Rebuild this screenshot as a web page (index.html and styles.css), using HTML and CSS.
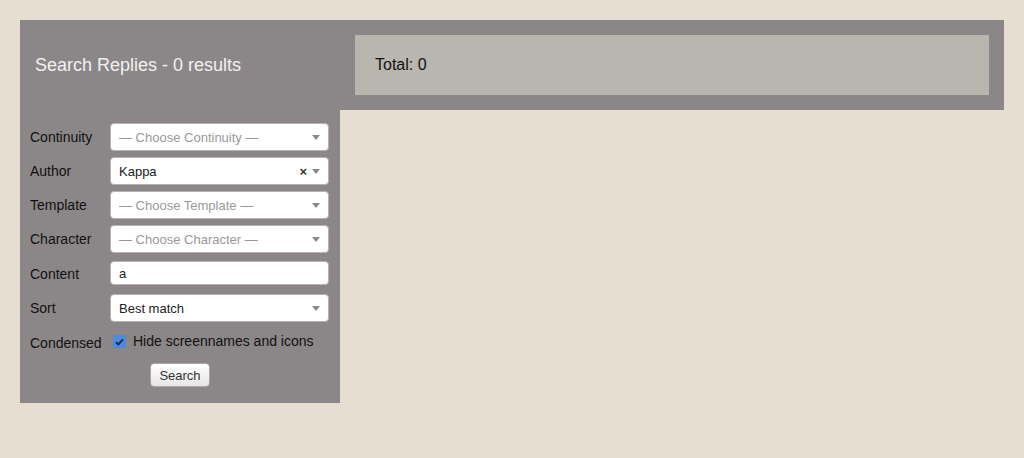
FILE: index.html
```html
<!DOCTYPE html>
<html>
<head>
<meta charset="utf-8">
<title>Search Replies</title>
<link rel="stylesheet" href="styles.css">
</head>
<body>
<div class="wrap">
  <div class="topbar">
    <div class="title">Search Replies - 0 results</div>
    <div class="total-wrap"><div class="total">Total: 0</div></div>
  </div>
  <div class="panel">
    <div class="form">
      <label class="lbl">Continuity</label>
      <div class="sel placeholder"><span class="txt">— Choose Continuity —</span><span class="arrow"></span></div>
      <label class="lbl">Author</label>
      <div class="sel"><span class="txt">Kappa</span><span class="clear">×</span><span class="arrow"></span></div>
      <label class="lbl">Template</label>
      <div class="sel placeholder"><span class="txt">— Choose Template —</span><span class="arrow"></span></div>
      <label class="lbl">Character</label>
      <div class="sel placeholder"><span class="txt">— Choose Character —</span><span class="arrow"></span></div>
      <label class="lbl">Content</label>
      <div class="inp">a</div>
      <label class="lbl">Sort</label>
      <div class="sel"><span class="txt">Best match</span><span class="arrow"></span></div>
      <label class="lbl cond">Condensed</label>
      <div class="check-row">
        <span class="box"><svg width="9" height="8" viewBox="0 0 9 8"><path d="M1 4.2 L3.4 6.4 L8 1.4" fill="none" stroke="#1b2b47" stroke-width="2"/></svg></span>
        <span class="check-txt">Hide screennames and icons</span>
      </div>
      <div class="btn-row"><button class="btn">Search</button></div>
    </div>
  </div>
</div>
</body>
</html>
```
FILE: styles.css
```css
html, body {
  margin: 0;
  padding: 0;
}
body {
  background: #e5ded1;
  font-family: "Liberation Sans", Arial, sans-serif;
  padding: 20px;
}
.wrap {
  width: 984px;
}
.topbar {
  display: flex;
  height: 90px;
  background: #8b8788;
}
.title {
  width: 305px;
  padding-left: 15px;
  display: flex;
  align-items: center;
  font-size: 18px;
  color: #f1f1f1;
}
.total-wrap {
  flex: 1;
  padding: 15px;
  display: flex;
}
.total {
  flex: 1;
  background: #b9b6af;
  display: flex;
  align-items: center;
  padding-left: 20px;
  font-size: 16px;
  color: #111;
}
.panel {
  width: 299px;
  background: #8b8788;
  padding: 13px 11px 16px 10px;
}
.form {
  display: grid;
  grid-template-columns: 80px 219px;
  row-gap: 6px;
  align-items: center;
}
.lbl {
  font-size: 14px;
  color: #111;
}
.lbl.cond {
  padding-top: 3px;
}
.sel {
  height: 28px;
  box-sizing: border-box;
  background: #fff;
  border: 1px solid #b5b2b3;
  border-radius: 4px;
  display: flex;
  align-items: center;
  padding-left: 8px;
  padding-right: 8px;
  font-size: 13px;
  color: #222;
}
.sel .txt {
  flex: 1;
}
.sel.placeholder .txt {
  color: #999;
}
.clear {
  font-size: 13px;
  font-weight: bold;
  color: #333;
  margin-right: 5px;
}
.arrow {
  width: 0;
  height: 0;
  border-left: 4px solid transparent;
  border-right: 4px solid transparent;
  border-top: 5px solid #888;
  margin-top: 1px;
}
.inp {
  height: 24px;
  margin: 2px 0 3px;
  box-sizing: border-box;
  background: #fff;
  border: 1px solid #b5b2b3;
  border-radius: 4px;
  display: flex;
  align-items: center;
  padding-left: 8px;
  font-size: 13px;
  color: #222;
}
.check-row {
  height: 26px;
  display: flex;
  align-items: center;
  padding-left: 3px;
}
.box {
  width: 13px;
  height: 13px;
  background: #4a8ae0;
  border-radius: 2px;
  display: flex;
  align-items: center;
  justify-content: center;
  margin-top: 1px;
  margin-right: 7px;
}
.check-txt {
  font-size: 14px;
  color: #111;
}
.btn-row {
  grid-column: 1 / 3;
  display: flex;
  justify-content: center;
  padding-top: 3px;
  margin-left: -10px;
  margin-right: -11px;
}
.btn {
  width: 60px;
  height: 24px;
  font-family: "Liberation Sans", Arial, sans-serif;
  font-size: 13px;
  color: #333;
  background: linear-gradient(#ffffff, #e6e6e6);
  border: 1px solid #a9a6a6;
  border-radius: 4px;
  padding: 0;
}
```
